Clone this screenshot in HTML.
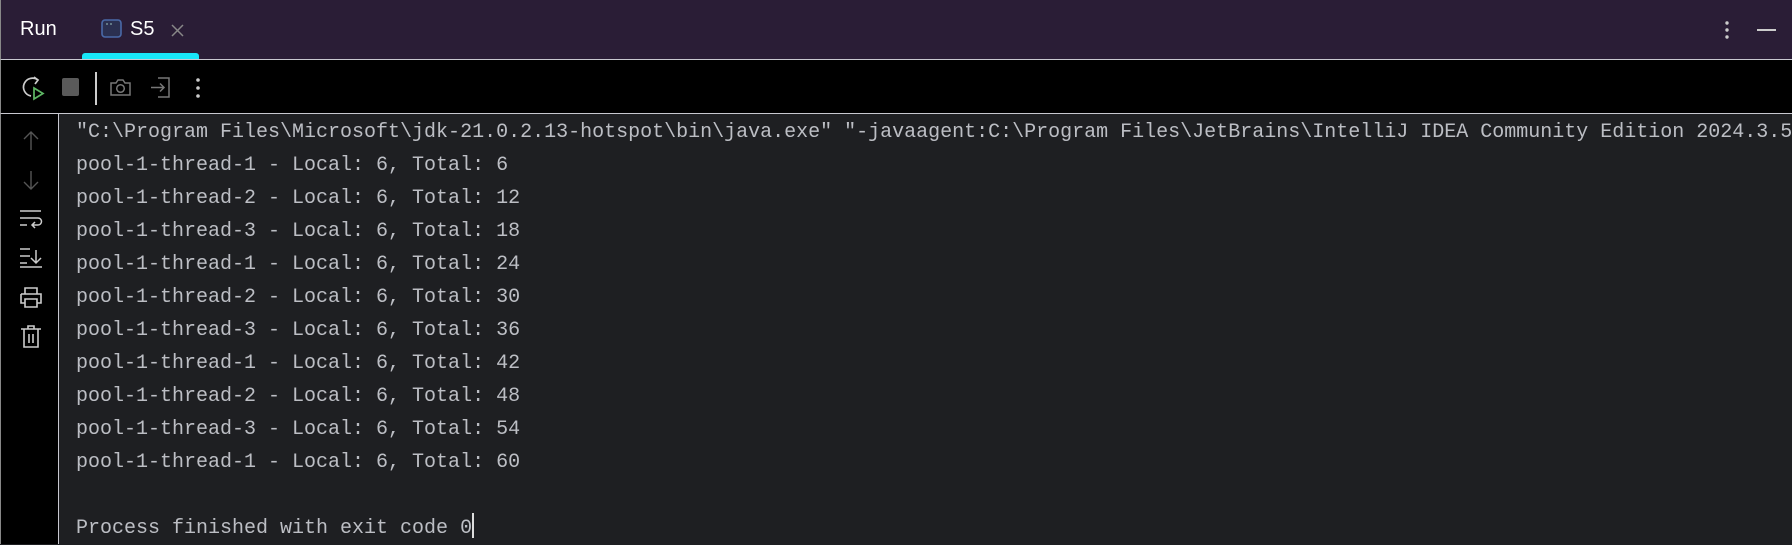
<!DOCTYPE html>
<html><head><style>
body{margin:0;width:1792px;height:544px;overflow:hidden;background:#1e1f22;font-family:"Liberation Sans",sans-serif;position:relative}
.hdr{position:absolute;left:0;top:0;width:1792px;height:59px;background:#2a1d36;border-bottom:1px solid #c8c8d0;border-left:1px solid #888}
.tb{position:absolute;left:0;top:60px;width:1792px;height:53px;background:#000;border-bottom:1px solid #c8c8d0;border-left:1px solid #888}
.gut{position:absolute;left:0;top:114px;width:57px;height:430px;background:#000;border-right:1px solid #c8c8d0;border-left:1px solid #888}
.out{position:absolute;left:76px;top:116px;font-family:"Liberation Mono",monospace;font-size:20px;color:#bcbec4;line-height:33px;white-space:pre}
svg{position:absolute}
</style></head><body>
<div class="hdr">
<div style="position:absolute;left:19px;top:18px;color:#fff;font-size:20px">Run</div>
<svg style="left:100px;top:19px" width="22" height="20"><rect x="1" y="1" width="19" height="17" rx="3" fill="#2b3050" stroke="#4a6aa8" stroke-width="1.6"/><line x1="5" y1="5" x2="7" y2="5" stroke="#8aa" stroke-width="1.2"/><line x1="9" y1="5" x2="11" y2="5" stroke="#8aa" stroke-width="1.2"/></svg>
<div style="position:absolute;left:129px;top:18px;color:#fff;font-size:20px">S5</div>
<svg style="left:170px;top:24px" width="13" height="13"><path d="M1 1L12 12M12 1L1 12" stroke="#888" stroke-width="1.5"/></svg>
<div style="position:absolute;left:81px;top:53px;width:117px;height:6px;background:#18e6f8;border-radius:3px 3px 0 0"></div>
<svg style="left:1722px;top:20px" width="8" height="20"><circle cx="4" cy="3" r="1.7" fill="#ccc"/><circle cx="4" cy="10" r="1.7" fill="#ccc"/><circle cx="4" cy="17" r="1.7" fill="#ccc"/></svg>
<div style="position:absolute;left:1756px;top:29px;width:19px;height:2px;background:#ccc"></div>
</div>
<div class="tb">
<svg style="left:20px;top:15px" width="26" height="26"><path d="M17 5A9 9 0 1 0 10 21" stroke="#ccc" stroke-width="1.7" fill="none"/><path d="M13 2L17 5L14 9" stroke="#ccc" stroke-width="1.7" fill="none"/><path d="M13 13L22 18.5L13 24Z" stroke="#5fb865" stroke-width="1.7" fill="none"/></svg>
<div style="position:absolute;left:61px;top:18px;width:17px;height:18px;background:#5a5a5a;border-radius:2px"></div>
<div style="position:absolute;left:94px;top:12px;width:2px;height:33px;background:#ccc"></div>
<svg style="left:108px;top:17px" width="23" height="21"><path d="M2 6h5l2-3h5l2 3h5v12H2Z" stroke="#777" stroke-width="1.5" fill="none"/><circle cx="11.5" cy="11.5" r="3.8" stroke="#777" stroke-width="1.5" fill="none"/></svg>
<svg style="left:148px;top:16px" width="22" height="23"><path d="M9 2h11v19H9" stroke="#777" stroke-width="1.5" fill="none"/><path d="M2 11.5h13M11 7.5l4 4-4 4" stroke="#777" stroke-width="1.5" fill="none"/></svg>
<svg style="left:193px;top:17px" width="8" height="22"><circle cx="4" cy="3" r="1.8" fill="#ccc"/><circle cx="4" cy="11" r="1.8" fill="#ccc"/><circle cx="4" cy="19" r="1.8" fill="#ccc"/></svg>
</div>
<div class="gut">
<svg style="left:21px;top:16px" width="18" height="22"><path d="M9 2v18M2 9l7-7 7 7" stroke="#555" stroke-width="1.4" fill="none"/></svg>
<svg style="left:21px;top:55px" width="18" height="22"><path d="M9 2v18M2 13l7 7 7-7" stroke="#555" stroke-width="1.4" fill="none"/></svg>
<svg style="left:18px;top:95px" width="24" height="20"><path d="M1 2h21M1 9h18a3.5 3.5 0 0 1 0 7h-6M16 13l-3 3 3 3M1 16h7" stroke="#ccc" stroke-width="1.5" fill="none"/></svg>
<svg style="left:18px;top:133px" width="24" height="22"><path d="M1 2h10M1 9h10M1 16h7M1 20h22M17 3v13M12 11l5 5 5-5" stroke="#ccc" stroke-width="1.5" fill="none"/></svg>
<svg style="left:18px;top:172px" width="24" height="22"><path d="M6 8V2h12v6M2 8h20v9h-4M6 17H2V8M6 13h12v8H6Z" stroke="#ccc" stroke-width="1.6" fill="none"/></svg>
<svg style="left:19px;top:211px" width="22" height="24"><path d="M1 4h20M8 4V1h6v3M4 4v18h14V4M9 9v9M13 9v9" stroke="#ccc" stroke-width="1.6" fill="none"/></svg>
</div>
<div class="out">"C:\Program Files\Microsoft\jdk-21.0.2.13-hotspot\bin\java.exe" "-javaagent:C:\Program Files\JetBrains\IntelliJ IDEA Community Edition 2024.3.5
pool-1-thread-1 - Local: 6, Total: 6
pool-1-thread-2 - Local: 6, Total: 12
pool-1-thread-3 - Local: 6, Total: 18
pool-1-thread-1 - Local: 6, Total: 24
pool-1-thread-2 - Local: 6, Total: 30
pool-1-thread-3 - Local: 6, Total: 36
pool-1-thread-1 - Local: 6, Total: 42
pool-1-thread-2 - Local: 6, Total: 48
pool-1-thread-3 - Local: 6, Total: 54
pool-1-thread-1 - Local: 6, Total: 60

Process finished with exit code 0<span style="display:inline-block;width:2px;height:25px;background:#ddd;vertical-align:-5px"></span></div>
</body></html>
